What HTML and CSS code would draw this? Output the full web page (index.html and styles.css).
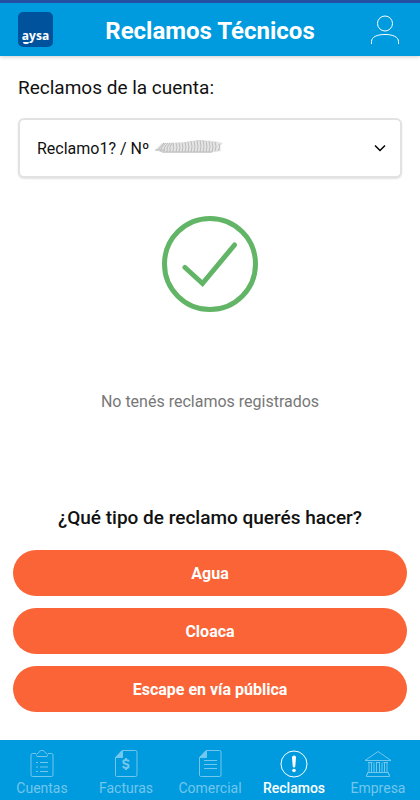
FILE: index.html
```html
<!DOCTYPE html>
<html lang="es">
<head>
  <meta charset="UTF-8">
  <meta name="viewport" content="width=device-width, initial-scale=1">
  <title>Reclamos Técnicos</title>
  <link rel="stylesheet" href="styles.css">
</head>
<body>

  <header class="topbar">
    <a class="logo" href="#"><span>aysa</span></a>
    <h1>Reclamos Técnicos</h1>
    <button class="profile" type="button" aria-label="Mi perfil">
      <svg width="30" height="30" viewBox="0 0 30 30">
        <circle cx="15" cy="8.500" r="7.500"/>
        <path d="M1.500 29v-2.500C1.500 22 7 19.500 15 19.500s13.500 2.500 13.500 7V29"/>
      </svg>
    </button>
  </header>

  <main>
    <section class="account">
      <label for="cuenta">Reclamos de la cuenta:</label>
      <div class="select-box">
        <select id="cuenta">
          <option>Reclamo1? / Nº</option>
        </select>
        <svg class="scribble" width="70" height="16" viewBox="0 0 70 16">
          <path class="smudge" d="M1 11L8 4 30 3 44 1 60 2 69 4 66 7 67 12 55 14 10 14z"/>
          <path class="loops" d="M1 11h9M4 11l6-7M7 13q-1-5 5-9M10 13q-1-5 4-9M13 13q-1-5 3-9M16 13q-1-5 2-9M19 13q1-5 0-9M22 13q2-5 0-9M25 13q2-5 0-9M28 13q2-5 0-9M31 13q2-5 0-10M34 13q2-5 0-10M37 13q2-5 0-11M40 13q2-5 0-11M43 13q2-5 0-12M46 13q2-5 0-12M49 13q2-5 0-12M52 13q2-5 0-11M55 13q2-5 0-11M58 13q2-5 0-10M61 12q2-5 0-9M64 12q3-4 1-7M8 13h50"/>
        </svg>
        <svg class="arrow" width="12" height="8" viewBox="0 0 12 8">
          <path d="M1 1.500L6 6.500L11 1.500"/>
        </svg>
      </div>
    </section>

    <section class="empty">
      <svg class="check" width="96" height="96" viewBox="0 0 96 96">
        <circle cx="48" cy="48" r="45.500"/>
        <path d="M23 51.500L40.500 67.500L72.500 29"/>
      </svg>
      <p>No tenés reclamos registrados</p>
    </section>

    <section class="actions">
      <h2>¿Qué tipo de reclamo querés hacer?</h2>
      <button type="button">Agua</button>
      <button type="button">Cloaca</button>
      <button type="button">Escape en vía pública</button>
    </section>
  </main>

  <nav class="tabs">
    <a href="#">
      <svg width="28" height="28" viewBox="0 0 28 28">
        <path d="M8 3.500H4.500a1.500 1.500 0 0 0-1.500 1.500V25a1.500 1.500 0 0 0 1.500 1.500h19A1.500 1.500 0 0 0 25 25V5a1.500 1.500 0 0 0-1.500-1.500H20"/>
        <path d="M9 6.500c-1-1.500-.5-3 1.500-3.500C11 1 12.500.5 14 .5s3 .5 3.500 2.500c2 .5 2.500 2 1.500 3.500z"/>
        <path d="M8 12.500h2M12 12.500h8M8 17h2M12 17h8M8 21.500h2M12 21.500h8"/>
      </svg>
      <span>Cuentas</span>
    </a>
    <a href="#">
      <svg width="28" height="28" viewBox="0 0 28 28">
        <path d="M10 .5h13.500a1.500 1.500 0 0 1 1.500 1.500V25a1.500 1.500 0 0 1-1.500 1.500h-18A1.500 1.500 0 0 1 3.500 25V7.500z"/>
        <path class="fill" d="M10.500.5v7h-7z"/>
        <path class="thick" d="M17 11.500c-.5-1.300-1.500-1.500-3-1.500-3.500 0-3.500 3.500 0 4s3.500 4 0 4c-1.500 0-2.500-.5-3-2M14 8v2M14 18v2"/>
      </svg>
      <span>Facturas</span>
    </a>
    <a href="#">
      <svg width="28" height="28" viewBox="0 0 28 28">
        <path d="M10 .5h13.500a1.500 1.500 0 0 1 1.500 1.500V25a1.500 1.500 0 0 1-1.500 1.500h-18A1.500 1.500 0 0 1 3.500 25V7.500z"/>
        <path class="fill" d="M10.500.5v7h-7z"/>
        <path d="M8 10.500h13M8 14.500h13M8 18.500h13"/>
      </svg>
      <span>Comercial</span>
    </a>
    <a class="active" href="#" aria-current="page">
      <svg width="28" height="28" viewBox="0 0 28 28">
        <circle cx="14" cy="14" r="13"/>
        <path class="solid" d="M12 7.500a2 2 0 0 1 4 0l-.7 8.700a1.300 1.300 0 0 1-2.600 0z"/>
        <circle class="solid" cx="14" cy="20.500" r="1.800"/>
      </svg>
      <span>Reclamos</span>
    </a>
    <a href="#">
      <svg width="28" height="28" viewBox="0 0 28 28">
        <path d="M1 10.500L14 1.500L27 10.500z"/>
        <path d="M4 12.500h4.500M12 12.500h4M19.500 12.500H24M5 12.500V22M7.500 12.500V22M12.500 12.500V22M15.500 12.500V22M20.500 12.500V22M23 12.500V22M10 12.500V22M18 12.500V22M3.500 22.500h21v2h1v2h-23v-2h1z"/>
      </svg>
      <span>Empresa</span>
    </a>
  </nav>

</body>
</html>
```

FILE: styles.css
```css
* {
  box-sizing: border-box;
}

body {
  margin: 0;
  min-height: 100vh;
  display: flex;
  flex-direction: column;
  font-family: Roboto, "Liberation Sans", sans-serif;
  background-color: #fff;
  color: #111;
}

h1, h2, p {
  margin: 0;
}

button {
  font-family: inherit;
  border: none;
  cursor: pointer;
}

svg {
  display: block;
  fill: none;
  stroke: currentColor;
}

/* header */
.topbar {
  display: flex;
  align-items: center;
  justify-content: space-between;
  height: 56px;
  padding: 0 18px;
  border-top: 3px solid #2350a0;
  background-color: #009bde;
  color: #fff;
  box-shadow: 0 1px 4px rgba(0, 0, 0, 0.2);
}

.topbar h1 {
  font-size: 24px;
  line-height: 32px;
  padding-top: 2px;
}

.logo {
  display: flex;
  align-items: flex-end;
  justify-content: center;
  width: 35px;
  height: 35px;
  padding-bottom: 2px;
  border-radius: 5px;
  background-color: #00529c;
  color: #fff;
  font: bold 12px/18px "Open Sans", sans-serif;
  text-decoration: none;
}

.logo span {
  position: relative;
}

/* tail under the first letter */
.logo span::after {
  content: "";
  position: absolute;
  left: 1px;
  bottom: 1px;
  width: 6px;
  height: 2px;
  border-radius: 0 0 2px 2px;
  background-color: #fff;
}

.profile {
  display: flex;
  justify-content: flex-end;
  padding: 0 2px 0 0;
  width: 35px;
  background: none;
  color: #fff;
}

/* content */
main {
  flex: 1;
  display: flex;
  flex-direction: column;
}

.account {
  padding: 20px 18px 0;
}

.account label {
  display: block;
  margin-bottom: 18px;
  font-size: 19px;
  line-height: 24px;
}

.select-box {
  position: relative;
}

.select-box select {
  display: block;
  width: 100%;
  height: 60px;
  padding: 0 40px 0 17px;
  appearance: none;
  border: 2px solid #e2e2e2;
  border-radius: 6px;
  background-color: #fff;
  color: #111;
  font-family: inherit;
  font-size: 16px;
  box-shadow: 0 1px 2px rgba(0, 0, 0, 0.12);
}

.scribble {
  position: absolute;
  top: 21px;
  left: 136px;
  pointer-events: none;
}

.scribble .smudge {
  fill: #e4e4e4;
  stroke: none;
}

.scribble .loops {
  stroke: #bcbcbc;
}

.arrow {
  position: absolute;
  top: 26px;
  right: 16px;
  stroke-width: 1.5;
  color: #000;
  pointer-events: none;
}

.empty {
  flex: 1;
  display: flex;
  flex-direction: column;
  align-items: center;
  gap: 78px;
  padding-top: 38px;
  color: #777;
  font-size: 16px;
  line-height: 24px;
}

.check {
  color: #62b566;
  stroke-width: 5;
}

.check path {
  stroke-linecap: round;
}

.actions {
  display: flex;
  flex-direction: column;
  gap: 12px;
  padding: 0 13px 28px;
}

.actions h2 {
  margin-bottom: 8px;
  font-size: 19px;
  line-height: 24px;
  font-weight: 500;
  text-align: center;
}

.actions button {
  height: 46px;
  border-radius: 23px;
  background-color: #fa6436;
  color: #fff;
  font-size: 16px;
  font-weight: bold;
}

/* bottom tabs */
.tabs {
  display: grid;
  grid-template-columns: repeat(5, 1fr);
  height: 60px;
  padding-top: 10px;
  background-color: #009bde;
}

.tabs a {
  display: flex;
  flex-direction: column;
  align-items: center;
  color: #73c6ec;
  font-size: 14px;
  line-height: 20px;
  text-decoration: none;
}

.tabs a.active {
  color: #fff;
  font-weight: 500;
}

.tabs .fill {
  fill: currentColor;
}

.tabs .thick {
  stroke-width: 2;
}

.tabs .solid {
  fill: currentColor;
  stroke: none;
}
```
